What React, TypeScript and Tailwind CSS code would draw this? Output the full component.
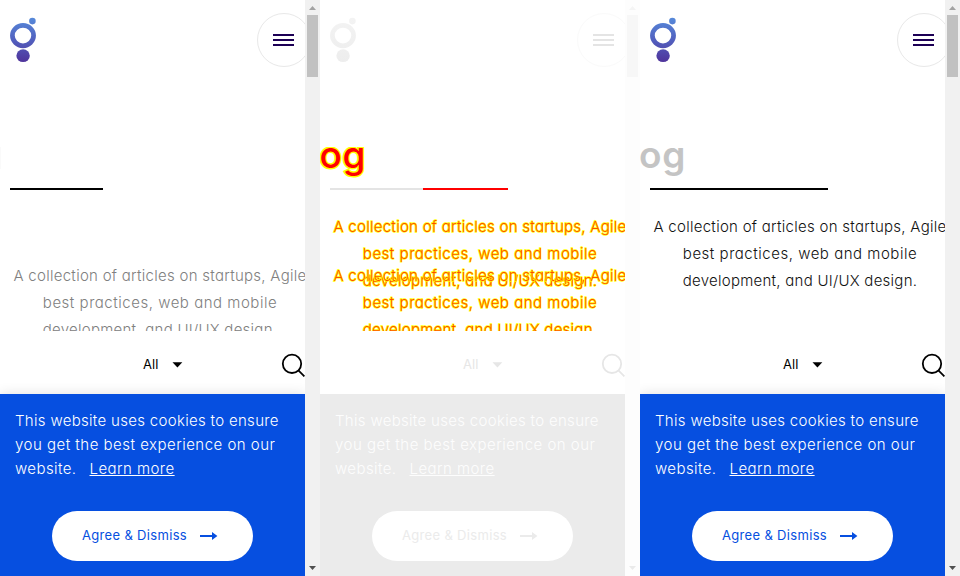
import clsx from "clsx";

type Tone = "start" | "diff" | "end";

const tones = {
  start: { ink: "text-black", menu: "bg-[#1c0055]", ring: "border-[#e8e8e8]", track: "bg-[#f1f1f1]", thumb: "bg-[#c1c1c1]", up: "text-[#a3a3a3]", down: "text-[#505050]", panel: "bg-[#064fe0]", copy: "text-white", cta: "text-[#064fe0]", shade: "shadow-[0_0_12px_rgba(0,0,0,0.12)]" },
  diff: { ink: "text-[#e6e6e6]", menu: "bg-[#e4e4e4]", ring: "border-[#fafafa]", track: "bg-[#fdfdfd]", thumb: "bg-[#f7f7f7]", up: "text-[#f4f4f4]", down: "text-[#eaeaea]", panel: "bg-[#ebebeb]", copy: "text-[#fdfdfd]", cta: "text-[#ebebeb]", shade: "shadow-none" },
  end: { ink: "text-black", menu: "bg-[#1c0055]", ring: "border-[#e8e8e8]", track: "bg-[#f1f1f1]", thumb: "bg-[#c1c1c1]", up: "text-[#a3a3a3]", down: "text-[#505050]", panel: "bg-[#064fe0]", copy: "text-white", cta: "text-[#064fe0]", shade: "shadow-[0_0_12px_rgba(0,0,0,0.12)]" },
};

function Logo({ tone }: { tone: Tone }) {
  const id = `logo-${tone}`;
  const diff = tone === "diff";
  return (
    <svg width="28" height="46" viewBox="9 17 28 46" className="-ml-px">
      <defs>
        <linearGradient id={id} gradientUnits="userSpaceOnUse" x1="0" y1="18" x2="0" y2="62">
          <stop offset="0" stopColor={diff ? "#f3f3f3" : "#5689d9"} />
          <stop offset="0.5" stopColor={diff ? "#f0f0f0" : "#5260bf"} />
          <stop offset="1" stopColor={diff ? "#ededed" : "#4f339b"} />
        </linearGradient>
      </defs>
      <circle cx="32.4" cy="21.1" r="3.3" fill={`url(#${id})`} />
      <ellipse cx="23" cy="35.6" rx="10.6" ry="10.2" fill="none" stroke={`url(#${id})`} strokeWidth="4.7" />
      <ellipse cx="23.1" cy="55.7" rx="6.7" ry="6.4" fill={`url(#${id})`} />
    </svg>
  );
}

function Header({ tone }: { tone: Tone }) {
  const t = tones[tone];
  return (
    <header className="flex h-[147px] shrink-0 items-start justify-between pl-2.5">
      <div className="pt-[17px]">
        <Logo tone={tone} />
      </div>
      <div className={clsx("-mr-1.5 mt-[13px] flex size-[54px] flex-col items-start justify-center gap-[3px] rounded-full border pl-[15px]", t.ring)}>
        {[0, 1, 2].map((i) => (
          <span key={i} className={clsx("h-0.5 w-[21px]", t.menu)} />
        ))}
      </div>
    </header>
  );
}

function Title({ tone }: { tone: Tone }) {
  return (
    <div className="flex h-[41px] shrink-0 overflow-hidden">
      {tone === "start" && <span className="h-[22px] w-px bg-[#fafafa]" />}
      {tone !== "start" && (
        <h1
          className={clsx(
            "-ml-[34px] -mt-[17px] flex w-[80px] justify-end whitespace-nowrap text-[37px] leading-[50px] tracking-[0.6px]",
            tone === "end" ? "font-semibold text-[#c4c4c4]" : "font-medium text-[#ff0000] [-webkit-text-stroke:3px_#ffff00] [paint-order:stroke_fill]",
          )}
        >
          Blog
        </h1>
      )}
    </div>
  );
}

function Rule({ tone }: { tone: Tone }) {
  return (
    <div className="flex h-0.5 shrink-0 pl-2.5">
      {tone === "start" && <span className="w-[93px] bg-black" />}
      {tone === "diff" && (
        <>
          <span className="w-[93px] bg-[#e4e4e4]" />
          <span className="w-[85px] bg-[#ff0000]" />
        </>
      )}
      {tone === "end" && <span className="w-[178px] bg-black" />}
    </div>
  );
}

function Intro({ className }: { className: string }) {
  return (
    <p className={clsx("ml-2.5 w-[300px] whitespace-nowrap text-center text-[15px] font-light leading-[27px]", className)}>
      <span className="block tracking-[0.28px]">A collection of articles on startups, Agile</span>
      <span className="block tracking-[0.52px]">best practices, web and mobile</span>
      <span className="block tracking-[0.26px]">development, and UI/UX design.</span>
    </p>
  );
}

const marked = "text-[#ff0000]/70 [-webkit-text-stroke:1.3px_#ffff00] [paint-order:stroke_fill]";

function Filters({ tone }: { tone: Tone }) {
  return (
    <div className={clsx("flex h-[63px] shrink-0 items-center pb-px pl-[143px] text-[13px]", tones[tone].ink)}>
      <span className="w-[29px] pt-1 leading-[18px] tracking-[0.1px]">All</span>
      <svg width="11" height="6" viewBox="0 0 11 6" fill="currentColor" className="mt-[5px]">
        <path d="M.5.3h9.800L5.400 5.400z" />
      </svg>
      <svg width="24" height="24" viewBox="0 0 24 24" fill="none" stroke="currentColor" strokeWidth="1.8" className="ml-[98px] mt-[5px] shrink-0">
        <circle cx="11" cy="10.8" r="9.2" />
        <path d="M17.400 17.400l6 6" />
      </svg>
    </div>
  );
}

function CookieBar({ tone }: { tone: Tone }) {
  const t = tones[tone];
  return (
    <section className={clsx("flex flex-1 flex-col px-[15px] pt-[15px]", t.panel, t.shade)}>
      <p className={clsx("whitespace-nowrap text-[15px] font-[350] leading-6", t.copy)}>
        <span className="block tracking-[0.31px]">This website uses cookies to ensure</span>
        <span className="block tracking-[0.49px]">you get the best experience on our</span>
        <span className="flex">
          <span className="w-[74.500px] tracking-[0.4px]">website.</span>
          <a className="font-light tracking-[0.45px] underline decoration-1 underline-offset-[1px] [text-decoration-skip-ink:none]">Learn more</a>
        </span>
      </p>
      <button className={clsx("ml-[37px] mt-[30px] flex h-[50px] w-[201px] items-center rounded-full bg-white pl-[30px] text-[13px]", t.cta)}>
        <span className="w-[118px] whitespace-nowrap text-left tracking-[0.33px]">Agree &amp; Dismiss</span>
        <svg width="18" height="8" viewBox="0 0 18 8" fill="currentColor">
          <path d="M0 3h12V0l5.400 4L12 8V5H0z" />
        </svg>
      </button>
    </section>
  );
}

function Scrollbar({ tone }: { tone: Tone }) {
  const t = tones[tone];
  return (
    <aside className={clsx("flex w-[15px] shrink-0 flex-col items-center", t.track)}>
      <svg width="15" height="15" viewBox="0 0 15 15" fill="currentColor" className={t.up}>
        <path d="M4 10l3.500-4L11 10z" />
      </svg>
      <span className={clsx("h-[62px] w-[11px]", t.thumb)} />
      <svg width="15" height="15" viewBox="0 0 15 15" fill="currentColor" className={clsx("mt-auto", t.down)}>
        <path d="M4 5h7L7.500 9z" />
      </svg>
    </aside>
  );
}

function Screen({ tone }: { tone: Tone }) {
  return (
    <div className="flex h-full w-80 shrink-0">
      <main className="flex w-[305px] shrink-0 flex-col overflow-hidden">
        <Header tone={tone} />
        <Title tone={tone} />
        <Rule tone={tone} />
        <div className="relative h-[141px] shrink-0 overflow-hidden">
          {tone !== "start" && <Intro className={clsx("mt-[23px]", tone === "diff" ? marked : "text-[#111]")} />}
          {tone !== "end" && <Intro className={clsx("absolute top-[72px]", tone === "diff" ? marked : "text-[#808080]")} />}
        </div>
        <Filters tone={tone} />
        <CookieBar tone={tone} />
      </main>
      <Scrollbar tone={tone} />
    </div>
  );
}

export default function App() {
  return (
    <div className="flex h-[576px] w-[960px] overflow-hidden bg-white font-['Inter',sans-serif] [font-feature-settings:'cv11']">
      <Screen tone="start" />
      <Screen tone="diff" />
      <Screen tone="end" />
    </div>
  );
}
